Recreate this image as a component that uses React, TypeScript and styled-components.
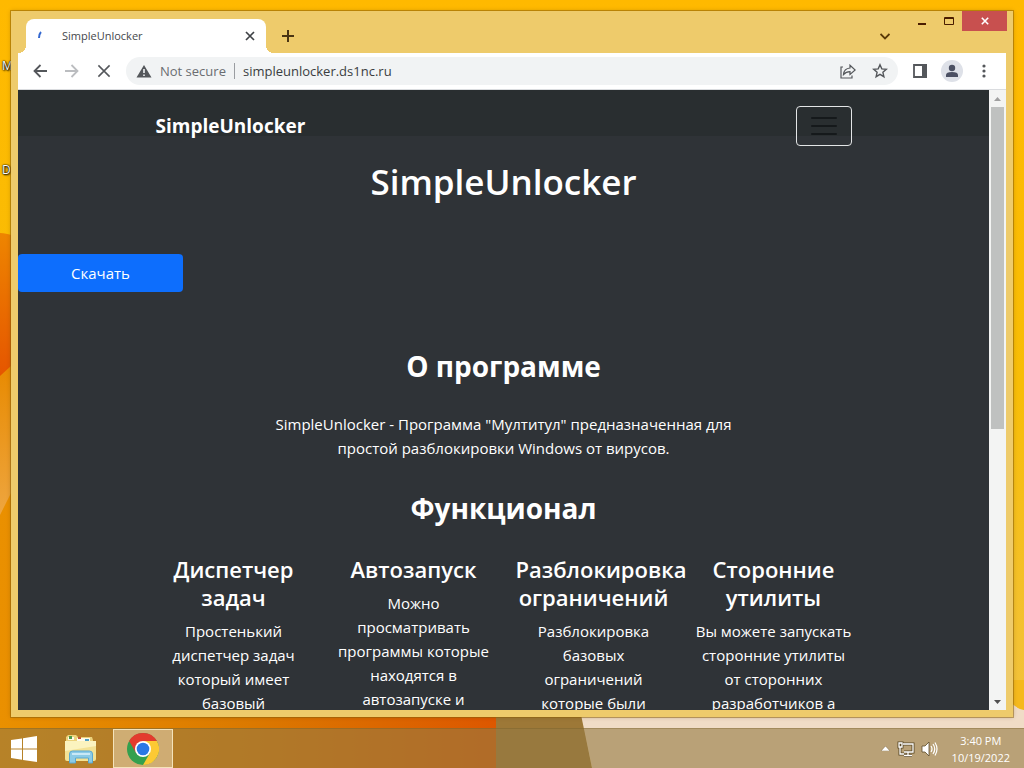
import React from "react";
import styled, { createGlobalStyle } from "styled-components";

const GlobalStyle = createGlobalStyle`
  *, *::before, *::after { box-sizing: border-box; }
  body { margin: 0; font-family: "Open Sans", "Noto Sans", sans-serif; font-size: 15px; line-height: 24px; }
  h1, h2, h3, p { margin: 0; }
  button, input { font: inherit; color: inherit; }
  button { padding: 0; border: 0; background: none; }
  svg { display: block; flex: none; }
`;

const Desktop = styled.div`
  display: grid;
  grid-template: minmax(0, 1fr) / minmax(0, 1fr);
  height: 100vh;
  overflow: hidden;
  & > * { grid-area: 1 / 1; }
`;

const WallpaperArt = styled.svg`
  width: 100%;
  height: 100%;
  min-height: 0;
`;

const DesktopLabel = styled.span<{ $top: number }>`
  position: absolute;
  left: 2px;
  top: ${(p) => p.$top}px;
  color: #fff;
  font-size: 12px;
  line-height: 16px;
  text-shadow: 0 0 2px #000, 1px 1px 2px #000, 0 0 1px #000;
`;

const Shell = styled.div`
  position: relative;
  display: flex;
  flex-direction: column;
  min-height: 0;
`;

const WindowArea = styled.div`
  flex: 1;
  min-height: 0;
  display: flex;
  padding: 11px;
`;

const BrowserWindow = styled.section`
  position: relative;
  flex: 1;
  min-width: 0;
  display: flex;
  flex-direction: column;
  padding: 0 7px 7px;
  background: #eecb6b;
  box-shadow: 0 0 0 1px rgba(140, 95, 10, 0.5), 0 0 4px rgba(90, 60, 0, 0.35);
`;

const TitleBar = styled.header`
  display: flex;
  align-items: flex-start;
  height: 42px;
  padding-left: 8px;
`;

const Tab = styled.div`
  position: relative;
  display: flex;
  align-items: center;
  width: 240px;
  height: 34px;
  margin-top: 8px;
  padding: 0 8px;
  border-radius: 8px 8px 0 0;
  background: #fff;
  &::before, &::after {
    content: "";
    position: absolute;
    bottom: 0;
    width: 8px;
    height: 8px;
  }
  &::before { right: 100%; background: radial-gradient(circle at 0 0, transparent 8px, #fff 8px); }
  &::after { left: 100%; background: radial-gradient(circle at 100% 0, transparent 8px, #fff 8px); }
`;

const TabTitle = styled.span`
  flex: 1;
  padding-left: 16px;
  color: #45484c;
  font-size: 11px;
`;

const IconButton = styled.button<{ $w: number; $h: number; $color?: string }>`
  display: flex;
  align-items: center;
  justify-content: center;
  width: ${(p) => p.$w}px;
  height: ${(p) => p.$h}px;
  color: ${(p) => p.$color ?? "#54575b"};
`;

const TabActions = styled.div`
  flex: 1;
  display: flex;
  justify-content: space-between;
  padding: 11px 10px 0 8px;
`;

const CaptionButtons = styled.div`
  display: flex;
  margin-right: -1px;
`;

const CloseButton = styled(IconButton)`
  background: #c8504f;
`;

const Toolbar = styled.div`
  display: flex;
  align-items: center;
  height: 37px;
  padding: 0 6px;
  background: #fff;
  border-bottom: 1px solid #dadcdf;
`;

const Omnibox = styled.form`
  flex: 1;
  display: flex;
  align-items: center;
  height: 28px;
  margin: 0 6px;
  padding: 0 2px 0 10px;
  border-radius: 14px;
  background: #f1f3f4;
  font-size: 13px;
`;

const SecurityLabel = styled.span`
  padding: 0 8px;
  color: #6a6d71;
  line-height: 16px;
  white-space: nowrap;
`;

const AddressInput = styled.input`
  flex: 1;
  min-width: 0;
  height: 16px;
  padding: 0 8px;
  border: 0;
  border-left: 1px solid #9a9da1;
  outline: 0;
  background: none;
  color: #3a3d41;
`;

const Viewport = styled.div`
  flex: 1;
  min-height: 0;
  display: flex;
`;

const Page = styled.main`
  flex: 1;
  min-width: 0;
  overflow: hidden;
  background: #2f3337;
  color: #fff;
`;

const Container = styled.div`
  max-width: 720px;
  margin: 0 auto;
`;

const Navbar = styled.nav`
  padding: 16px 0;
  background: linear-gradient(#292e30 46px, transparent 46px);
`;

const NavContent = styled(Container)`
  display: flex;
  align-items: center;
  justify-content: space-between;
  padding: 0 12px;
`;

const Brand = styled.a`
  color: #fff;
  font-size: 19px;
  font-weight: 700;
  text-decoration: none;
`;

const Toggler = styled(IconButton)`
  border: 1px solid #e3e5e6;
  border-radius: 4px;
`;

const PageTitle = styled.h1`
  font-size: 35px;
  font-weight: 600;
  line-height: 48px;
  text-align: center;
  margin-top: -4px;
`;

const DownloadButton = styled.button`
  display: block;
  width: 165px;
  height: 38px;
  margin: 48px 0 55px;
  border-radius: 4px;
  background: #0d6efd;
`;

const SectionTitle = styled.h2`
  font-size: 28px;
  font-weight: 700;
  line-height: 38px;
  text-align: center;
`;

const Intro = styled.p`
  max-width: 480px;
  margin: 27px auto 29px;
  text-align: center;
`;

const FeatureGrid = styled(Container)`
  display: grid;
  grid-template-columns: repeat(4, minmax(0, 1fr));
  margin-top: 28px;
`;

const Feature = styled.article`
  padding: 0 12px;
  text-align: center;
`;

const FeatureTitle = styled.h3`
  margin-bottom: 8px;
  font-size: 22px;
  font-weight: 600;
  line-height: 28px;
`;

const Scrollbar = styled.div`
  display: flex;
  flex-direction: column;
  width: 17px;
  background: #f3f4f3;
`;

const ScrollTrack = styled.div`
  flex: 1;
  padding: 0 2px;
`;

const ScrollThumb = styled.div`
  height: 55%;
  background: #bfc1c0;
`;

const Taskbar = styled.footer`
  display: flex;
  align-items: stretch;
  height: 40px;
  padding: 0 14px 0 0;
  border-top: 1px solid rgba(110, 85, 30, 0.3);
  background: rgba(148, 121, 67, 0.6);
`;

const TaskButton = styled.button<{ $w: number; $active?: boolean }>`
  display: flex;
  align-items: center;
  justify-content: center;
  width: ${(p) => p.$w}px;
  border: ${(p) => (p.$active ? "1px solid #f4e3bb" : "0")};
  background: ${(p) => (p.$active ? "rgba(225, 205, 165, 0.6)" : "none")};
`;

const Tray = styled.div`
  display: flex;
  align-items: center;
  gap: 6px;
  margin-left: auto;
`;

const Clock = styled.time`
  margin-left: 7px;
  color: #fff;
  font-size: 11px;
  line-height: 17px;
  text-align: center;
`;

const Wallpaper = () => (
  <WallpaperArt viewBox="0 0 1024 768" preserveAspectRatio="none" aria-hidden="true">
    <defs>
      <linearGradient id="sky" x1="0" y1="0" x2="0" y2="1">
        <stop offset="0" stopColor="#ffb900" />
        <stop offset="0.5" stopColor="#f8bd06" />
        <stop offset="0.9" stopColor="#f2c23a" />
      </linearGradient>
      <linearGradient id="flame" x1="0" y1="0" x2="0" y2="1">
        <stop offset="0" stopColor="#ee8500" />
        <stop offset="1" stopColor="#e55500" />
      </linearGradient>
      <linearGradient id="glow" x1="0" y1="0" x2="0" y2="1">
        <stop offset="0" stopColor="#e88a00" />
        <stop offset="1" stopColor="#efab4c" />
      </linearGradient>
      <linearGradient id="ground" x1="0" y1="0" x2="1" y2="0">
        <stop offset="0" stopColor="#ea9000" />
        <stop offset="0.5" stopColor="#db7900" />
        <stop offset="1" stopColor="#dd5600" />
      </linearGradient>
    </defs>
    <rect width="1024" height="768" fill="url(#sky)" />
    <path d="M0 233q6 0 18 4v140H0z" fill="url(#flame)" />
    <path d="M0 376l12-11v180H0z" fill="url(#glow)" />
    <path d="M0 515l12-24v200h482l8 77H0z" fill="url(#ground)" />
    <path d="M496 700h83l13 68h-96z" fill="#9d7837" />
    <path d="M578 700h430l16 10v58H592z" fill="#f0dcc6" />
    <path d="M1010 680h14v30q-8-1-14-9z" fill="#f5b91c" />
  </WallpaperArt>
);

const Cross = ({ size, width }: { size: number; width: number }) => (
  <svg width={size} height={size} viewBox="0 0 10 10" stroke="currentColor" strokeWidth={width}>
    <path d="M1 1l8 8M9 1L1 9" />
  </svg>
);

const ScrollArrow = ({ down }: { down?: boolean }) => (
  <IconButton $w={17} $h={17} $color={down ? "#505050" : "#a0a0a0"} aria-label={down ? "Scroll down" : "Scroll up"}>
    <svg width="7" height="4" fill="currentColor">
      <path d={down ? "M0 0h7L3.500 4z" : "M0 4h7L3.500 0z"} />
    </svg>
  </IconButton>
);

const Chrome = () => (
  <svg width="32" height="32" viewBox="0 0 32 32">
    <circle cx="16" cy="16" r="16" fill="#34a04e" />
    <path d="M16 8h13.860A16 16 0 0 0 2.140 8l6.930 12z" fill="#e33b2e" />
    <path d="M29.860 8H16l6.930 12L16 32A16 16 0 0 0 29.860 8z" fill="#fcc934" />
    <circle cx="16" cy="16" r="8" fill="#fff" />
    <circle cx="16" cy="16" r="6.300" fill="#2b78e4" />
  </svg>
);

const Explorer = () => (
  <svg width="32" height="30" viewBox="0 0 32 30">
    <path d="M1 3l2-2h8l2 2h14l1 3v20H1z" fill="#ecd27c" />
    <path d="M3 3h6v3H3zM12 4h13v3H12z" fill="#fffbe9" />
    <path d="M4 2h3v3H4z" fill="#4c9b4b" />
    <path d="M13 3h3v2h-3z" fill="#c4553a" />
    <path d="M20 5h4v2h-4z" fill="#4f9fc4" />
    <path d="M0 7h31v18q0 2-2 2H2q-2 0-2-2z" fill="#f3e294" />
    <path d="M0 7h31v5L0 17z" fill="#fbf3bf" />
    <path d="M4.500 29V20q0-3 3-3h17q3 0 3 3v9h-4v-5h-13v5z" fill="#8ccbe6" stroke="#5aa8cf" />
    <path d="M7 20h18" stroke="#c9e9f7" strokeWidth="2" />
  </svg>
);

const features = [
  { title: "Диспетчер задач", text: "Простенький диспетчер задач который имеет базовый" },
  { title: "Автозапуск", text: "Можно просматривать программы которые находятся в автозапуске и" },
  { title: "Разблокировка ограничений", text: "Разблокировка базовых ограничений которые были" },
  { title: "Сторонние утилиты", text: "Вы можете запускать сторонние утилиты от сторонних разработчиков а" },
];

export default function App() {
  return (
    <Desktop>
      <GlobalStyle />
      <Wallpaper />
      <Shell>
        <DesktopLabel $top={58}>M</DesktopLabel>
        <DesktopLabel $top={162}>D</DesktopLabel>
        <WindowArea>
          <BrowserWindow>
            <TitleBar>
              <Tab>
                <svg width="12" height="12" viewBox="0 0 12 12" fill="none">
                  <path d="M5 8q0-4 2-6" stroke="#3468d0" strokeWidth="2" />
                </svg>
                <TabTitle>SimpleUnlocker</TabTitle>
                <IconButton $w={16} $h={16} $color="#3f4246" aria-label="Close tab"><Cross size={10} width={1.7} /></IconButton>
              </Tab>
              <TabActions>
                <IconButton $w={28} $h={28} $color="#4a3513" aria-label="New tab">
                  <svg width="12" height="12" stroke="currentColor" strokeWidth="2"><path d="M6 0v12M0 6h12" /></svg>
                </IconButton>
                <IconButton $w={28} $h={28} $color="#5a3a08" aria-label="Search tabs">
                  <svg width="10" height="7" fill="none" stroke="currentColor" strokeWidth="1.800"><path d="M.5 1L5 5.500 9.500 1" /></svg>
                </IconButton>
              </TabActions>
              <CaptionButtons>
                <IconButton $w={26} $h={20} $color="#4a1d00" aria-label="Minimize">
                  <svg width="8" height="8" fill="currentColor"><path d="M0 6h8v2H0z" /></svg>
                </IconButton>
                <IconButton $w={27} $h={20} $color="#4a1d00" aria-label="Maximize">
                  <svg width="10" height="8" fill="none" stroke="currentColor"><path d="M.5.500h9v7h-9zM0 1.500h10" /></svg>
                </IconButton>
                <CloseButton $w={45} $h={20} $color="#fff" aria-label="Close"><Cross size={8} width={2} /></CloseButton>
              </CaptionButtons>
            </TitleBar>
            <Toolbar>
              <IconButton $w={32} $h={32} aria-label="Back">
                <svg width="14" height="14" fill="none" stroke="currentColor" strokeWidth="1.800"><path d="M14 7H1.500M7.500 1l-6 6 6 6" /></svg>
              </IconButton>
              <IconButton $w={32} $h={32} $color="#bbbdc0" aria-label="Forward">
                <svg width="14" height="14" fill="none" stroke="currentColor" strokeWidth="1.800"><path d="M0 7h12.500M6.500 1l6 6-6 6" /></svg>
              </IconButton>
              <IconButton $w={32} $h={32} aria-label="Stop loading"><Cross size={14} width={1.1} /></IconButton>
              <Omnibox>
                <svg width="16" height="14" viewBox="0 0 16 14"><path d="M8 1l7.500 12.500H.5z" fill="#54575b" /><path d="M8 5v4M8 10.500v1.500" stroke="#f1f3f4" strokeWidth="1.600" /></svg>
                <SecurityLabel id="security">Not secure</SecurityLabel>
                <AddressInput aria-label="Address" aria-describedby="security" defaultValue="simpleunlocker.ds1nc.ru" />
                <IconButton $w={32} $h={28} type="button" aria-label="Share">
                  <svg width="16" height="15" viewBox="0 0 16 15" fill="none" stroke="currentColor" strokeWidth="1.200">
                    <path d="M3 3H1v11h11v-2.500M3.500 10.500q.5-6 6.500-6.500V1.200L15.200 6 10 10.500V7.700q-4 0-6.500 2.800z" />
                  </svg>
                </IconButton>
                <IconButton $w={32} $h={28} type="button" aria-label="Bookmark">
                  <svg width="16" height="16" viewBox="0 0 16 16" fill="none" stroke="currentColor" strokeWidth="1.400">
                    <path d="M8 1.800l1.800 4.100 4.500.4-3.400 3 1 4.400L8 11.400l-3.900 2.300 1-4.400-3.400-3 4.500-.4z" />
                  </svg>
                </IconButton>
              </Omnibox>
              <IconButton $w={32} $h={32} aria-label="Side panel">
                <svg width="14" height="14"><path d="M1 1h12v12H1z" fill="#fff" stroke="#54575b" strokeWidth="1.800" /><path d="M9 0h5v14H9z" fill="#54575b" /></svg>
              </IconButton>
              <IconButton $w={32} $h={32} aria-label="Profile">
                <svg width="22" height="22"><circle cx="11" cy="11" r="11" fill="#dee1e8" /><circle cx="11" cy="8" r="3.200" fill="#4b5063" /><path d="M5 17v-2q0-3 6-3t6 3v2z" fill="#4b5063" /></svg>
              </IconButton>
              <IconButton $w={32} $h={32} aria-label="Menu">
                <svg width="4" height="14" fill="currentColor"><circle cx="2" cy="2" r="1.600" /><circle cx="2" cy="7" r="1.600" /><circle cx="2" cy="12" r="1.600" /></svg>
              </IconButton>
            </Toolbar>
            <Viewport>
              <Page>
                <Navbar>
                  <NavContent>
                    <Brand href="#">SimpleUnlocker</Brand>
                    <Toggler $w={56} $h={40} $color="#15191b" aria-label="Toggle navigation">
                      <svg width="26" height="20" stroke="currentColor" strokeWidth="2" strokeLinecap="round"><path d="M1 2h24M1 10h24M1 18h24" /></svg>
                    </Toggler>
                  </NavContent>
                </Navbar>
                <PageTitle>SimpleUnlocker</PageTitle>
                <DownloadButton>Скачать</DownloadButton>
                <SectionTitle>О программе</SectionTitle>
                <Intro>SimpleUnlocker - Программа "Мултитул" предназначенная для простой разблокировки Windows от вирусов.</Intro>
                <SectionTitle>Функционал</SectionTitle>
                <FeatureGrid>
                  {features.map((f) => (
                    <Feature key={f.title}>
                      <FeatureTitle>{f.title}</FeatureTitle>
                      <p>{f.text}</p>
                    </Feature>
                  ))}
                </FeatureGrid>
              </Page>
              <Scrollbar>
                <ScrollArrow />
                <ScrollTrack><ScrollThumb /></ScrollTrack>
                <ScrollArrow down />
              </Scrollbar>
            </Viewport>
          </BrowserWindow>
        </WindowArea>
        <Taskbar>
          <TaskButton $w={48} aria-label="Start">
            <svg width="26" height="26" viewBox="0 0 26 26" fill="#fff"><path d="M0 4l11-1.600V12.500H0zM12 2.200L26 0v12.500H12zM0 13.500h11v10.200L0 22zM12 13.500h14V26l-14-2.100z" /></svg>
          </TaskButton>
          <TaskButton $w={65} aria-label="File Explorer"><Explorer /></TaskButton>
          <TaskButton $w={60} $active aria-label="Google Chrome"><Chrome /></TaskButton>
          <Tray>
            <IconButton $w={10} $h={16} $color="#fff" aria-label="Show hidden icons">
              <svg width="9" height="5" fill="currentColor" stroke="#6a5530" strokeWidth="0.400"><path d="M0 5h9L4.500 0z" /></svg>
            </IconButton>
            <IconButton $w={18} $h={18} $color="#fff" aria-label="Network">
              <svg width="18" height="16" viewBox="0 0 18 16" fill="none">
                <path d="M6 3h10v8H7M11 11v3M7 14.500h8M3 6v7h4M2 2h3v4H2z" stroke="#5b4a28" strokeWidth="3" />
                <path d="M6 3h10v8H7M11 11v3M7 14.500h8M3 6v7h4M2 2h3v4H2z" stroke="currentColor" strokeWidth="1.300" />
              </svg>
            </IconButton>
            <IconButton $w={18} $h={18} $color="#fff" aria-label="Volume">
              <svg width="17" height="16" viewBox="0 0 17 16" fill="none">
                <path d="M1 5h3l4-4v14l-4-4H1z" fill="currentColor" stroke="#5b4a28" strokeWidth="0.800" />
                <path d="M10 5q2 3 0 6M12 3q3.500 5 0 10M14 1.500q4 6.500 0 13" stroke="currentColor" strokeWidth="1.200" />
              </svg>
            </IconButton>
            <Clock>3:40 PM<br />10/19/2022</Clock>
          </Tray>
        </Taskbar>
      </Shell>
    </Desktop>
  );
}
